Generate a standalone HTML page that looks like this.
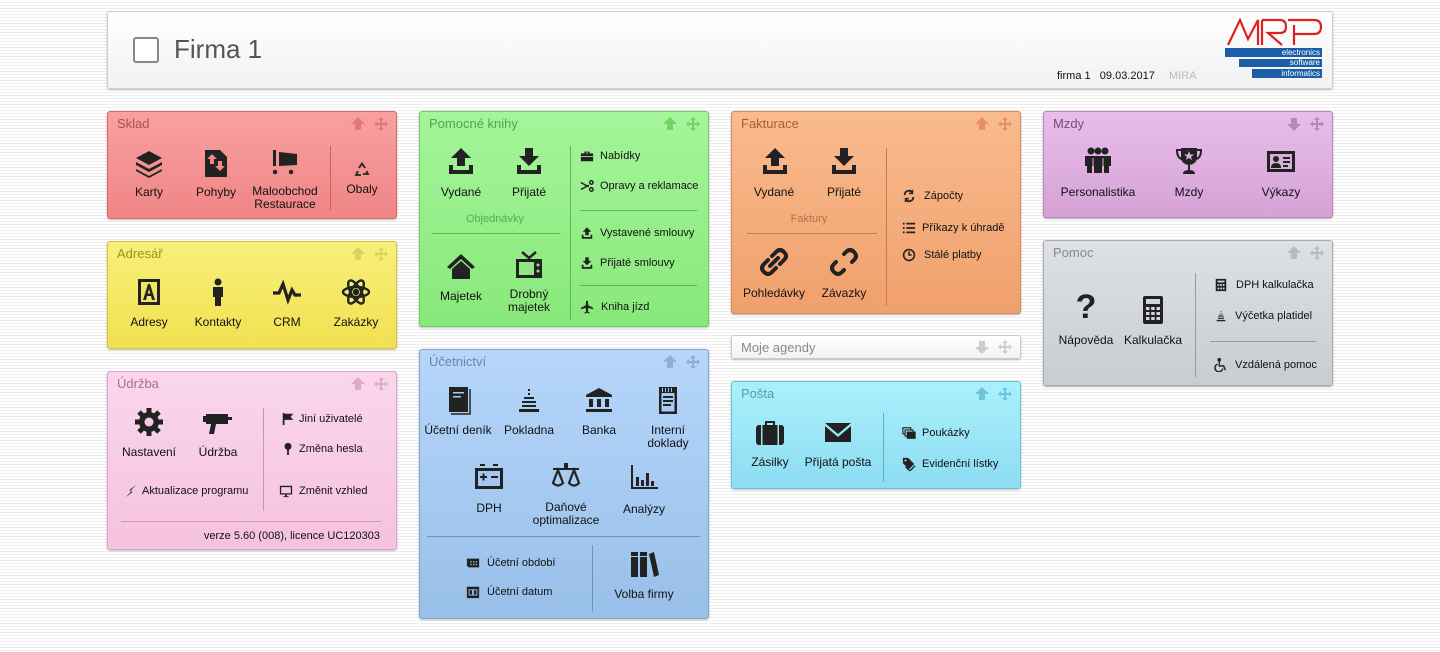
<!DOCTYPE html>
<html><head><meta charset="utf-8">
<style>
*{margin:0;padding:0;box-sizing:border-box}
body{width:1440px;height:652px;overflow:hidden;position:relative;font-family:"Liberation Sans",Tahoma,sans-serif;font-size:12px;color:#111;
background:repeating-linear-gradient(180deg,#fff 0,#fff 2px,#eeeeee 2px,#eeeeee 3px)}
.p{position:absolute;border-radius:3px;box-shadow:0 1px 2px rgba(0,0,0,.25)}
.t{position:absolute;left:9px;top:4px;font-size:13px}
.c{position:absolute;transform:translateX(-50%);text-align:center;white-space:nowrap;line-height:13px}
.l{position:absolute;white-space:nowrap;font-size:11px;line-height:13px}
svg.b{position:absolute;width:32px;height:32px}
svg.s{position:absolute;width:14px;height:14px}
.vl{position:absolute;width:1px}
.hl{position:absolute;height:1px}
</style></head><body>

<!-- header -->
<div class="p" style="left:107px;top:11px;width:1226px;height:78px;background:linear-gradient(#fff,#f1f1f1);border:1px solid #d0d0d0"></div>
<div style="position:absolute;left:133px;top:37px;width:26px;height:26px;border:2px solid #888;border-radius:3px;background:#fff"></div>
<div style="position:absolute;left:174px;top:34px;font-size:26px;color:#555">Firma 1</div>
<div class="l" style="left:1057px;top:70px;font-size:11px">firma 1&nbsp;&nbsp;&nbsp;09.03.2017</div>
<div class="l" style="left:1169px;top:70px;color:#bbb">MIRA</div>
<svg style="position:absolute;left:1226px;top:17px;width:98px;height:30px" viewBox="0 0 98 30" fill="none" stroke="#e02020" stroke-width="2.2">
<path d="M2 28 L14 3 L22 22 L32 3 L32 28 M36 3 V28 M36 3 H54 Q60 3 60 10 Q60 16 54 16 H42 L56 28 M62 3 H88 Q95 3 95 10 Q95 17 88 17 H68 M68 8 V28"/></svg>
<div style="position:absolute;left:1225px;top:48px;width:97px;height:9px;background:#1a5ea8;color:#fff;font-size:8px;line-height:9px;text-align:right;padding-right:2px">electronics</div>
<div style="position:absolute;left:1239px;top:59px;width:83px;height:8px;background:#1a5ea8;color:#fff;font-size:8px;line-height:8px;text-align:right;padding-right:2px">software</div>
<div style="position:absolute;left:1252px;top:69px;width:70px;height:9px;background:#1a5ea8;color:#fff;font-size:8px;line-height:9px;text-align:right;padding-right:2px">informatics</div>

<div class="p" style="left:107px;top:111px;width:290px;height:108px;background:linear-gradient(#f9a0a0,#ef8585);border:1px solid #d96a6a"><div class="t" style="color:#b05050">Sklad</div></div>
<div class="p" style="left:107px;top:241px;width:290px;height:108px;background:linear-gradient(#f9f07a,#f1e050);border:1px solid #d5c340"><div class="t" style="color:#a09020">Adresář</div></div>
<div class="p" style="left:107px;top:371px;width:290px;height:179px;background:linear-gradient(#fad6ec,#f5c2e0);border:1px solid #dba3c5"><div class="t" style="color:#a87090">Údržba</div></div>
<div class="p" style="left:419px;top:111px;width:290px;height:216px;background:linear-gradient(#a5f59a,#88e87a);border:1px solid #6ccb60"><div class="t" style="color:#4ea845">Pomocné knihy</div></div>
<div class="p" style="left:419px;top:349px;width:290px;height:270px;background:linear-gradient(#b6d6fa,#98bfe9);border:1px solid #7ea6d3"><div class="t" style="color:#6688aa">Účetnictví</div></div>
<div class="p" style="left:731px;top:111px;width:290px;height:203px;background:linear-gradient(#f9bb8e,#f0a06c);border:1px solid #d9885a"><div class="t" style="color:#a86030">Fakturace</div></div>
<div class="p" style="left:731px;top:335px;width:290px;height:24px;background:linear-gradient(#fff,#f2f2f2);border:1px solid #ccc"><div class="t" style="color:#888;top:4px">Moje agendy</div></div>
<div class="p" style="left:731px;top:381px;width:290px;height:108px;background:linear-gradient(#aaf0fc,#8ddcf2);border:1px solid #6cc0d8"><div class="t" style="color:#5a9ab0">Pošta</div></div>
<div class="p" style="left:1043px;top:111px;width:290px;height:107px;background:linear-gradient(#e8bdea,#d6a2d6);border:1px solid #b985b9"><div class="t" style="color:#7a4a7a">Mzdy</div></div>
<div class="p" style="left:1043px;top:240px;width:290px;height:146px;background:linear-gradient(#dde0e4,#c9ccd0);border:1px solid #aaa"><div class="t" style="color:#888">Pomoc</div></div>

<!-- title controls -->
<svg style="position:absolute;left:350px;top:116px;width:40px;height:16px" viewBox="0 0 40 16" fill="#e07a7a"><path d="M8 1 L15 8 H11 V14 H5 V8 H1Z"/><path d="M31 1 L34 4 H32 V7 H35 V5 L38 8 L35 11 V9 H32 V12 H34 L31 15 L28 12 H30 V9 H27 V11 L24 8 L27 5 V7 H30 V4 H28Z"/></svg>
<svg style="position:absolute;left:350px;top:246px;width:40px;height:16px" viewBox="0 0 40 16" fill="#ddd060"><path d="M8 1 L15 8 H11 V14 H5 V8 H1Z"/><path d="M31 1 L34 4 H32 V7 H35 V5 L38 8 L35 11 V9 H32 V12 H34 L31 15 L28 12 H30 V9 H27 V11 L24 8 L27 5 V7 H30 V4 H28Z"/></svg>
<svg style="position:absolute;left:350px;top:376px;width:40px;height:16px" viewBox="0 0 40 16" fill="#e0aac8"><path d="M8 1 L15 8 H11 V14 H5 V8 H1Z"/><path d="M31 1 L34 4 H32 V7 H35 V5 L38 8 L35 11 V9 H32 V12 H34 L31 15 L28 12 H30 V9 H27 V11 L24 8 L27 5 V7 H30 V4 H28Z"/></svg>
<svg style="position:absolute;left:662px;top:116px;width:40px;height:16px" viewBox="0 0 40 16" fill="#70d565"><path d="M8 1 L15 8 H11 V14 H5 V8 H1Z"/><path d="M31 1 L34 4 H32 V7 H35 V5 L38 8 L35 11 V9 H32 V12 H34 L31 15 L28 12 H30 V9 H27 V11 L24 8 L27 5 V7 H30 V4 H28Z"/></svg>
<svg style="position:absolute;left:662px;top:354px;width:40px;height:16px" viewBox="0 0 40 16" fill="#8aaed8"><path d="M8 1 L15 8 H11 V14 H5 V8 H1Z"/><path d="M31 1 L34 4 H32 V7 H35 V5 L38 8 L35 11 V9 H32 V12 H34 L31 15 L28 12 H30 V9 H27 V11 L24 8 L27 5 V7 H30 V4 H28Z"/></svg>
<svg style="position:absolute;left:974px;top:116px;width:40px;height:16px" viewBox="0 0 40 16" fill="#e6925e"><path d="M8 1 L15 8 H11 V14 H5 V8 H1Z"/><path d="M31 1 L34 4 H32 V7 H35 V5 L38 8 L35 11 V9 H32 V12 H34 L31 15 L28 12 H30 V9 H27 V11 L24 8 L27 5 V7 H30 V4 H28Z"/></svg>
<svg style="position:absolute;left:974px;top:339px;width:40px;height:16px" viewBox="0 0 40 16" fill="#ccc"><path d="M5 2 H11 V8 H15 L8 15 L1 8 H5Z"/><path d="M31 1 L34 4 H32 V7 H35 V5 L38 8 L35 11 V9 H32 V12 H34 L31 15 L28 12 H30 V9 H27 V11 L24 8 L27 5 V7 H30 V4 H28Z"/></svg>
<svg style="position:absolute;left:974px;top:386px;width:40px;height:16px" viewBox="0 0 40 16" fill="#6ec4dc"><path d="M8 1 L15 8 H11 V14 H5 V8 H1Z"/><path d="M31 1 L34 4 H32 V7 H35 V5 L38 8 L35 11 V9 H32 V12 H34 L31 15 L28 12 H30 V9 H27 V11 L24 8 L27 5 V7 H30 V4 H28Z"/></svg>
<svg style="position:absolute;left:1286px;top:116px;width:40px;height:16px" viewBox="0 0 40 16" fill="#b588b5"><path d="M5 2 H11 V8 H15 L8 15 L1 8 H5Z"/><path d="M31 1 L34 4 H32 V7 H35 V5 L38 8 L35 11 V9 H32 V12 H34 L31 15 L28 12 H30 V9 H27 V11 L24 8 L27 5 V7 H30 V4 H28Z"/></svg>
<svg style="position:absolute;left:1286px;top:245px;width:40px;height:16px" viewBox="0 0 40 16" fill="#b8bbbf"><path d="M8 1 L15 8 H11 V14 H5 V8 H1Z"/><path d="M31 1 L34 4 H32 V7 H35 V5 L38 8 L35 11 V9 H32 V12 H34 L31 15 L28 12 H30 V9 H27 V11 L24 8 L27 5 V7 H30 V4 H28Z"/></svg>

<!-- SKLAD -->
<svg class="b" style="left:133px;top:147px" viewBox="0 0 32 32" fill="#222"><path d="M16 4 L29 11 L16 18 L3 11Z M3 15 L16 22 L29 15 L29 18 L16 25 L3 18Z M3 22 L16 29 L29 22 L29 24 L16 31 L3 24Z"/></svg>
<div class="c" style="left:149px;top:186px">Karty</div>
<svg class="b" style="left:200px;top:147px" viewBox="0 0 32 32" fill="#222"><path d="M5 3 H20 L27 10 V30 H5Z" /><path d="M12 7 L17 12 H14 V17 H10 V12 H7Z M18 14 H22 V19 H25 L20 24 L15 19 H18Z" fill="#f08888"/></svg>
<div class="c" style="left:216px;top:186px">Pohyby</div>
<svg class="b" style="left:269px;top:146px" viewBox="0 0 32 32" fill="#222"><rect x="4" y="4" width="3" height="16"/><path d="M10 6 L28 8 V19 L10 20Z"/><circle cx="6" cy="26" r="2.2"/><circle cx="22" cy="26" r="2.2"/></svg>
<div class="c" style="left:285px;top:185px">Maloobchod<br>Restaurace</div>
<div class="vl" style="left:330px;top:146px;height:64px;background:#d06060"></div>
<svg class="b" style="left:354px;top:162px;width:16px;height:16px" viewBox="0 0 16 16" fill="none" stroke="#222" stroke-width="1.8"><path d="M5 6 L8 1.5 L11 6 M12.5 9 L14 12 H9 M7 13 H2 L4 9"/></svg>
<div class="c" style="left:362px;top:183px">Obaly</div>

<!-- ADRESAR -->
<svg class="b" style="left:133px;top:276px" viewBox="0 0 32 32" fill="#222"><path d="M5 3 H27 V29 H5Z"/><rect x="8" y="6" width="16" height="20" fill="#f3e460"/><path d="M10 24 L15 8 H17 L22 24 H19 L18 20 H14 L13 24Z M14.7 17.5 H17.3 L16 13Z"/></svg>
<div class="c" style="left:149px;top:316px">Adresy</div>
<svg class="b" style="left:202px;top:276px" viewBox="0 0 32 32" fill="#222"><circle cx="16" cy="6" r="3.5"/><path d="M11 11 H21 V21 H19 V30 H13 V21 H11Z"/></svg>
<div class="c" style="left:218px;top:316px">Kontakty</div>
<svg class="b" style="left:271px;top:276px" viewBox="0 0 32 32" fill="none" stroke="#222" stroke-width="3.2"><path d="M2 17 H8 L12 8 L17 24 L21 14 L24 19 H30"/></svg>
<div class="c" style="left:287px;top:316px">CRM</div>
<svg class="b" style="left:340px;top:276px" viewBox="0 0 32 32" fill="none" stroke="#222" stroke-width="2.4"><ellipse cx="16" cy="16" rx="13" ry="5"/><ellipse cx="16" cy="16" rx="13" ry="5" transform="rotate(60 16 16)"/><ellipse cx="16" cy="16" rx="13" ry="5" transform="rotate(-60 16 16)"/><circle cx="16" cy="16" r="2" fill="#222"/></svg>
<div class="c" style="left:356px;top:316px">Zakázky</div>

<!-- UDRZBA -->
<svg class="b" style="left:133px;top:406px" viewBox="0 0 32 32" fill="#222"><circle cx="16" cy="16" r="10"/><g stroke="#222" stroke-width="5"><path d="M16 2 V30 M2 16 H30 M6 6 L26 26 M26 6 L6 26"/></g><circle cx="16" cy="16" r="4.5" fill="#f7c8e4"/></svg>
<div class="c" style="left:149px;top:446px">Nastavení</div>
<svg class="b" style="left:202px;top:406px" viewBox="0 0 32 32" fill="#222"><path d="M4 8 H26 V18 H14 L12 28 H7 L9 18 H4Z"/><rect x="26" y="11" width="4" height="3"/><rect x="1" y="10" width="3" height="6"/></svg>
<div class="c" style="left:218px;top:446px">Údržba</div>
<div class="vl" style="left:263px;top:408px;height:103px;background:#c994b4"></div>
<svg class="s" style="left:281px;top:412px" viewBox="0 0 16 16" fill="#222"><rect x="2" y="1" width="2" height="14"/><path d="M4 2 H14 L11 5.5 L14 9 H4Z"/></svg>
<div class="l" style="left:299px;top:413px">Jiní uživatelé</div>
<svg class="s" style="left:281px;top:442px" viewBox="0 0 16 16" fill="#222"><circle cx="8" cy="5" r="4"/><rect x="7" y="8" width="2" height="7"/></svg>
<div class="l" style="left:299px;top:443px">Změna hesla</div>
<svg class="s" style="left:124px;top:484px" viewBox="0 0 16 16" fill="#222"><path d="M14 1 L6 7 L9 8 L2 15 L10 9 L7 8Z"/></svg>
<div class="l" style="left:142px;top:485px">Aktualizace programu</div>
<svg class="s" style="left:279px;top:484px" viewBox="0 0 16 16" fill="#222"><path d="M1 2 H15 V12 H9 V14 H11 V15 H5 V14 H7 V12 H1Z M2.5 3.5 V10.5 H13.5 V3.5Z"/></svg>
<div class="l" style="left:299px;top:485px">Změnit vzhled</div>
<div class="hl" style="left:121px;top:521px;width:260px;background:#d19bbb"></div>
<div class="l" style="right:1060px;top:530px">verze 5.60 (008), licence UC120303</div>

<!-- POMOCNE -->
<svg class="b" style="left:445px;top:145px" viewBox="0 0 32 32" fill="#222"><path d="M16 3 L26 13 H20 V21 H12 V13 H6Z M4 20 H8 V25 H24 V20 H28 V29 H4Z"/></svg>
<div class="c" style="left:461px;top:186px">Vydané</div>
<svg class="b" style="left:513px;top:145px" viewBox="0 0 32 32" fill="#222"><path d="M12 3 H20 V11 H26 L16 21 L6 11 H12Z M4 20 H8 V25 H24 V20 H28 V29 H4Z"/></svg>
<div class="c" style="left:529px;top:186px">Přijaté</div>
<div class="c" style="left:495px;top:213px;font-size:11px;color:#55b04c">Objednávky</div>
<div class="hl" style="left:432px;top:233px;width:128px;background:#5cb852"></div>
<svg class="b" style="left:445px;top:250px" viewBox="0 0 32 32" fill="#222"><path d="M16 4 L30 17 L27 19 L16 9 L5 19 L2 17Z M7 19 L16 11 L25 19 V29 H7Z"/></svg>
<div class="c" style="left:461px;top:290px">Majetek</div>
<svg class="b" style="left:513px;top:249px" viewBox="0 0 32 32" fill="#222"><path d="M9 3 L16 9 L23 3" fill="none" stroke="#222" stroke-width="2.5"/><path d="M3 10 H29 V29 H3Z"/><rect x="6" y="13" width="15" height="13" fill="#8fe882"/><circle cx="25" cy="16" r="1.5" fill="#8fe882"/><circle cx="25" cy="22" r="1.5" fill="#8fe882"/></svg>
<div class="c" style="left:529px;top:288px">Drobný<br>majetek</div>
<div class="vl" style="left:570px;top:146px;height:174px;background:#5cb852"></div>
<svg class="s" style="left:580px;top:149px" viewBox="0 0 16 16" fill="#222"><path d="M5 3 H11 V5 H15 V14 H1 V5 H5Z M6.5 4.2 V5 H9.5 V4.2Z"/><rect x="1" y="8" width="14" height="1" fill="#98ec8a"/></svg>
<div class="l" style="left:600px;top:150px">Nabídky</div>
<svg class="s" style="left:580px;top:179px" viewBox="0 0 16 16" fill="none" stroke="#222" stroke-width="1.6"><path d="M1 4 L10 9 M1 12 L10 7"/><circle cx="13" cy="4" r="2"/><circle cx="13" cy="12" r="2"/></svg>
<div class="l" style="left:600px;top:180px">Opravy a reklamace</div>
<div class="hl" style="left:580px;top:210px;width:117px;background:#5cb852"></div>
<svg class="s" style="left:580px;top:226px" viewBox="0 0 32 32" fill="#222"><path d="M16 3 L26 13 H20 V21 H12 V13 H6Z M4 20 H8 V25 H24 V20 H28 V29 H4Z"/></svg>
<div class="l" style="left:600px;top:227px">Vystavené smlouvy</div>
<svg class="s" style="left:580px;top:256px" viewBox="0 0 32 32" fill="#222"><path d="M12 3 H20 V11 H26 L16 21 L6 11 H12Z M4 20 H8 V25 H24 V20 H28 V29 H4Z"/></svg>
<div class="l" style="left:600px;top:257px">Přijaté smlouvy</div>
<div class="hl" style="left:580px;top:285px;width:117px;background:#5cb852"></div>
<svg class="s" style="left:580px;top:300px" viewBox="0 0 16 16" fill="#222"><path d="M7 1 H9 L9.5 6 L15 9 V10.5 L9.5 9 L9 13 L11 14.5 V15.5 L8 14.5 L5 15.5 V14.5 L7 13 L6.5 9 L1 10.5 V9 L6.5 6Z"/></svg>
<div class="l" style="left:601px;top:301px">Kniha jízd</div>

<!-- UCETNICTVI -->
<svg class="b" style="left:442px;top:384px" viewBox="0 0 32 32" fill="#222"><path d="M7 3 H26 V28 H7Z"/><path d="M9 30 H28 V5" fill="none" stroke="#222" stroke-width="1.5"/><rect x="11" y="8" width="11" height="1.5" fill="#a8c9f2"/><rect x="11" y="12" width="8" height="1.5" fill="#a8c9f2"/></svg>
<div class="c" style="left:458px;top:424px">Účetní deník</div>
<svg class="b" style="left:513px;top:384px" viewBox="0 0 32 32" fill="#222"><rect x="15" y="5" width="2" height="2"/><rect x="15" y="9" width="2" height="2"/><rect x="11" y="13" width="10" height="2"/><rect x="9" y="17" width="14" height="2"/><rect x="9" y="21" width="14" height="2"/><rect x="6" y="25" width="20" height="3"/></svg>
<div class="c" style="left:529px;top:424px">Pokladna</div>
<svg class="b" style="left:583px;top:384px" viewBox="0 0 32 32" fill="#222"><path d="M16 4 L29 11 V13 H3 V11Z M6 15 H10 V23 H6Z M14 15 H18 V23 H14Z M22 15 H26 V23 H22Z M3 25 H29 V28 H3Z"/></svg>
<div class="c" style="left:599px;top:424px">Banka</div>
<svg class="b" style="left:652px;top:384px" viewBox="0 0 32 32" fill="#222"><path d="M7 3 H25 V30 H7Z"/><rect x="9.5" y="9" width="13" height="18.5" fill="#a8c9f2"/><rect x="11" y="12" width="10" height="2"/><rect x="11" y="16" width="10" height="2"/><rect x="11" y="20" width="8" height="2"/><rect x="10" y="4" width="1" height="4" fill="#a8c9f2"/><rect x="13" y="4" width="1" height="4" fill="#a8c9f2"/><rect x="16" y="4" width="1" height="4" fill="#a8c9f2"/><rect x="19" y="4" width="1" height="4" fill="#a8c9f2"/></svg>
<div class="c" style="left:668px;top:424px">Interní<br>doklady</div>
<svg class="b" style="left:473px;top:461px" viewBox="0 0 32 32" fill="#222"><path d="M2 7 H30 V28 H2Z"/><rect x="5" y="10" width="22" height="15" fill="#a4c6f0"/><rect x="7" y="3" width="5" height="2"/><rect x="20" y="3" width="5" height="2"/><rect x="7" y="15" width="7" height="2"/><rect x="9.5" y="12.5" width="2" height="7"/><rect x="18" y="15" width="7" height="2"/></svg>
<div class="c" style="left:489px;top:502px">DPH</div>
<svg class="b" style="left:550px;top:461px" viewBox="0 0 32 32" fill="#222"><rect x="14" y="2" width="4" height="5"/><rect x="3" y="7" width="26" height="2"/><path d="M8 9 L3 22 Q8 27 13 22Z M24 9 L19 22 Q24 27 29 22Z" fill="none" stroke="#222" stroke-width="2.2"/></svg>
<div class="c" style="left:566px;top:501px">Daňové<br>optimalizace</div>
<svg class="b" style="left:628px;top:461px" viewBox="0 0 32 32" fill="#222"><rect x="3" y="4" width="2" height="24"/><rect x="3" y="26" width="27" height="2"/><rect x="8" y="16" width="3" height="9"/><rect x="13" y="19" width="3" height="6"/><rect x="18" y="12" width="3" height="13"/><rect x="23" y="20" width="3" height="5"/></svg>
<div class="c" style="left:644px;top:503px">Analýzy</div>
<div class="hl" style="left:427px;top:536px;width:273px;background:#6a93c3"></div>
<div class="vl" style="left:592px;top:545px;height:67px;background:#6a93c3"></div>
<svg class="s" style="left:466px;top:556px" viewBox="0 0 16 16" fill="#222"><path d="M1 3 H15 V13 H3 L1 11Z"/><g fill="#a4c6f0"><rect x="5" y="6" width="1.5" height="1.5"/><rect x="8" y="6" width="1.5" height="1.5"/><rect x="11" y="6" width="1.5" height="1.5"/><rect x="5" y="9" width="1.5" height="1.5"/><rect x="8" y="9" width="1.5" height="1.5"/><rect x="11" y="9" width="1.5" height="1.5"/></g></svg>
<div class="l" style="left:487px;top:557px">Účetní období</div>
<svg class="s" style="left:466px;top:585px" viewBox="0 0 16 16" fill="#222"><path d="M1 2 H15 V15 H1Z"/><rect x="3" y="5" width="10" height="7" fill="#a4c6f0"/><rect x="4" y="6" width="3" height="5"/><rect x="9" y="6" width="3" height="5"/></svg>
<div class="l" style="left:487px;top:586px">Účetní datum</div>
<svg class="b" style="left:628px;top:548px" viewBox="0 0 32 32" fill="#222"><rect x="3" y="4" width="7" height="25"/><rect x="12" y="4" width="7" height="25"/><path d="M21 6 L26 4 L31 27 L26 29Z"/><rect x="3" y="8" width="7" height="1" fill="#a4c6f0"/><rect x="12" y="8" width="7" height="1" fill="#a4c6f0"/></svg>
<div class="c" style="left:644px;top:588px">Volba firmy</div>

<!-- FAKTURACE -->
<svg class="b" style="left:759px;top:145px" viewBox="0 0 32 32" fill="#222"><path d="M16 3 L26 13 H20 V21 H12 V13 H6Z M4 20 H8 V25 H24 V20 H28 V29 H4Z"/></svg>
<div class="c" style="left:774px;top:186px">Vydané</div>
<svg class="b" style="left:828px;top:145px" viewBox="0 0 32 32" fill="#222"><path d="M12 3 H20 V11 H26 L16 21 L6 11 H12Z M4 20 H8 V25 H24 V20 H28 V29 H4Z"/></svg>
<div class="c" style="left:844px;top:186px">Přijaté</div>
<div class="c" style="left:809px;top:213px;font-size:11px;color:#b0704a">Faktury</div>
<div class="hl" style="left:747px;top:233px;width:130px;background:#c87a4c"></div>
<svg class="b" style="left:758px;top:246px" viewBox="0 0 32 32" fill="none" stroke="#222" stroke-width="4" stroke-linecap="round"><path d="M14 10 L18 6 Q22 2 26 6 Q30 10 26 14 L22 18 M18 22 L14 26 Q10 30 6 26 Q2 22 6 18 L10 14 M12 20 L20 12"/></svg>
<div class="c" style="left:774px;top:287px">Pohledávky</div>
<svg class="b" style="left:828px;top:246px" viewBox="0 0 32 32" fill="none" stroke="#222" stroke-width="4" stroke-linecap="round"><path d="M16 8 L18 6 Q22 2 26 6 Q30 10 26 14 L24 16 M16 24 L14 26 Q10 30 6 26 Q2 22 6 18 L8 16"/></svg>
<div class="c" style="left:844px;top:287px">Závazky</div>
<div class="vl" style="left:886px;top:148px;height:158px;background:#c87a4c"></div>
<svg class="s" style="left:902px;top:189px" viewBox="0 0 16 16" fill="none" stroke="#222" stroke-width="2"><path d="M3 7 A5 5 0 0 1 12 4 M13 9 A5 5 0 0 1 4 12"/><path d="M12 1 V5 H8 M4 15 V11 H8" stroke-width="1.6"/></svg>
<div class="l" style="left:924px;top:190px">Zápočty</div>
<svg class="s" style="left:902px;top:221px" viewBox="0 0 16 16" fill="#222"><rect x="1" y="2" width="2" height="2"/><rect x="5" y="2" width="10" height="2"/><rect x="1" y="7" width="2" height="2"/><rect x="5" y="7" width="10" height="2"/><rect x="1" y="12" width="2" height="2"/><rect x="5" y="12" width="10" height="2"/></svg>
<div class="l" style="left:922px;top:222px">Příkazy k úhradě</div>
<svg class="s" style="left:902px;top:248px" viewBox="0 0 16 16" fill="none" stroke="#222" stroke-width="1.8"><circle cx="8" cy="8" r="6.2"/><path d="M8 4 V8 H11"/></svg>
<div class="l" style="left:924px;top:249px">Stálé platby</div>

<!-- POSTA -->
<svg class="b" style="left:754px;top:416px" viewBox="0 0 32 32" fill="#222"><path d="M11 5 H21 V9 H19 V7 H13 V9 H11Z"/><rect x="2" y="9" width="28" height="20" rx="3"/><rect x="7" y="9" width="1.5" height="20" fill="#9be4f6"/><rect x="23.5" y="9" width="1.5" height="20" fill="#9be4f6"/></svg>
<div class="c" style="left:770px;top:456px">Zásilky</div>
<svg class="b" style="left:822px;top:416px" viewBox="0 0 32 32" fill="#222"><path d="M3 7 H29 L16 18Z M3 10 L16 21 L29 10 V26 H3Z"/></svg>
<div class="c" style="left:838px;top:456px">Přijatá pošta</div>
<div class="vl" style="left:883px;top:413px;height:69px;background:#5aaec6"></div>
<svg class="s" style="left:902px;top:426px" viewBox="0 0 16 16" fill="none" stroke="#222" stroke-width="1.3"><rect x="1" y="2" width="9" height="7"/><rect x="3.5" y="4.5" width="9" height="7" fill="#9de6f7"/><rect x="6" y="7" width="9" height="7" fill="#222"/></svg>
<div class="l" style="left:922px;top:427px">Poukázky</div>
<svg class="s" style="left:902px;top:457px" viewBox="0 0 16 16" fill="#222"><path d="M1 1 H7 L14 8 L8 14 L1 7Z"/><path d="M4 11 L9 16 L15 10" fill="none" stroke="#222" stroke-width="1.5"/><circle cx="4" cy="4" r="1.2" fill="#9de6f7"/></svg>
<div class="l" style="left:922px;top:458px">Evidenční lístky</div>

<!-- MZDY -->
<svg class="b" style="left:1082px;top:145px" viewBox="0 0 32 32" fill="#222"><circle cx="9" cy="6" r="3.5"/><circle cx="16" cy="6" r="3.5"/><circle cx="23" cy="6" r="3.5"/><path d="M3 11 H29 V21 H27 V28 H22 V21 H20 V28 H12 V21 H10 V28 H5 V21 H3Z"/><rect x="10.5" y="13" width="1" height="8" fill="#dcb0dc"/><rect x="20.5" y="13" width="1" height="8" fill="#dcb0dc"/></svg>
<div class="c" style="left:1098px;top:186px">Personalistika</div>
<svg class="b" style="left:1173px;top:145px" viewBox="0 0 32 32" fill="#222"><path d="M8 3 H24 V12 Q24 19 16 20 Q8 19 8 12Z"/><path d="M8 5 H4 Q4 13 9 14 M24 5 H28 Q28 13 23 14" fill="none" stroke="#222" stroke-width="2"/><rect x="15" y="20" width="2" height="5"/><path d="M10 29 Q10 25 16 25 Q22 25 22 29Z"/><path d="M16 6 L17.3 9.5 H21 L18 11.7 L19.1 15 L16 13 L12.9 15 L14 11.7 L11 9.5 H14.7Z" fill="#dcb0dc"/></svg>
<div class="c" style="left:1189px;top:186px">Mzdy</div>
<svg class="b" style="left:1265px;top:145px" viewBox="0 0 32 32" fill="#222"><path d="M2 6 H30 V27 H2Z"/><rect x="5" y="9" width="22" height="15" fill="#d9aed9"/><circle cx="11" cy="14" r="3"/><path d="M6 23 Q6 18 11 18 Q16 18 16 23Z"/><rect x="18" y="12" width="7" height="2"/><rect x="18" y="16" width="7" height="2"/><rect x="18" y="20" width="5" height="2"/></svg>
<div class="c" style="left:1281px;top:186px">Výkazy</div>

<!-- POMOC -->
<div style="position:absolute;left:1070px;top:290px;width:32px;text-align:center;font-size:34px;font-weight:bold;line-height:34px;color:#222">?</div>
<div class="c" style="left:1086px;top:334px">Nápověda</div>
<svg class="b" style="left:1137px;top:294px" viewBox="0 0 32 32" fill="#222"><rect x="6" y="2" width="20" height="28" rx="2"/><rect x="9" y="5" width="14" height="5" fill="#d4d7da"/><g fill="#d4d7da"><rect x="9" y="13" width="3.5" height="3"/><rect x="14.2" y="13" width="3.5" height="3"/><rect x="19.5" y="13" width="3.5" height="3"/><rect x="9" y="18" width="3.5" height="3"/><rect x="14.2" y="18" width="3.5" height="3"/><rect x="19.5" y="18" width="3.5" height="3"/><rect x="9" y="23" width="3.5" height="3"/><rect x="14.2" y="23" width="3.5" height="3"/><rect x="19.5" y="23" width="3.5" height="3"/></g></svg>
<div class="c" style="left:1153px;top:334px">Kalkulačka</div>
<div class="vl" style="left:1195px;top:273px;height:104px;background:#999"></div>
<svg class="s" style="left:1214px;top:278px" viewBox="0 0 16 16" fill="#222"><rect x="2" y="1" width="12" height="14"/><g fill="#d4d7da"><rect x="4" y="3" width="8" height="2"/><rect x="4" y="7" width="2" height="2"/><rect x="7" y="7" width="2" height="2"/><rect x="10" y="7" width="2" height="2"/><rect x="4" y="11" width="2" height="2"/><rect x="7" y="11" width="2" height="2"/><rect x="10" y="11" width="2" height="2"/></g></svg>
<div class="l" style="left:1236px;top:279px">DPH kalkulačka</div>
<svg class="s" style="left:1214px;top:309px" viewBox="0 0 32 32" fill="#222"><rect x="15" y="5" width="2" height="2"/><rect x="15" y="9" width="2" height="2"/><rect x="11" y="13" width="10" height="2"/><rect x="9" y="17" width="14" height="2"/><rect x="9" y="21" width="14" height="2"/><rect x="6" y="25" width="20" height="3"/></svg>
<div class="l" style="left:1235px;top:310px">Výčetka platidel</div>
<div class="hl" style="left:1210px;top:341px;width:106px;background:#999"></div>
<svg class="s" style="left:1214px;top:358px" viewBox="0 0 16 16" fill="none" stroke="#222" stroke-width="1.6"><circle cx="6" cy="2" r="1.3" fill="#222"/><path d="M6 4 V9 H11 L13 14 M4 7 A4.5 4.5 0 1 0 10 12"/></svg>
<div class="l" style="left:1235px;top:359px">Vzdálená pomoc</div>

</body></html>
